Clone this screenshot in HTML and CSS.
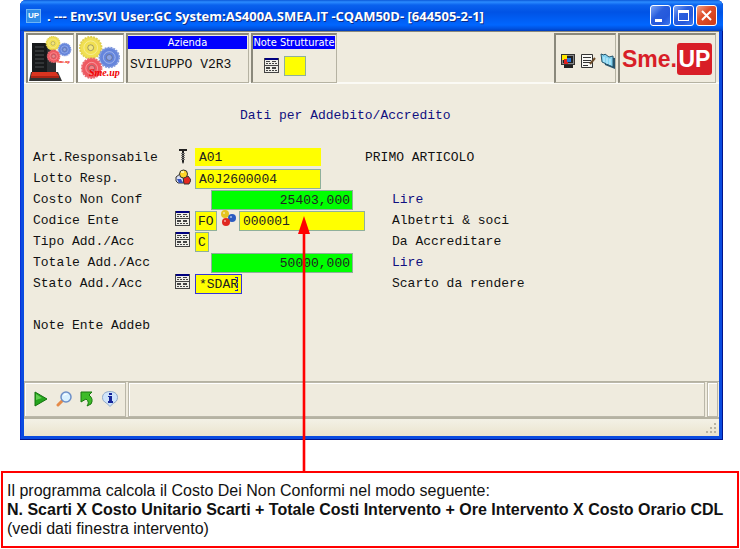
FILE: index.html
```html
<!DOCTYPE html>
<html lang="it">
<head>
<meta charset="utf-8">
<title>Dati per Addebito/Accredito</title>
<link rel="stylesheet" href="styles.css">
</head>
<body>
<svg class="defs" aria-hidden="true">
  <symbol id="list" viewBox="0 0 15 15">
    <path fill="#444" d="M0 0h15v15H0z"/><path fill="#f0efe8" d="M1 2h13v5H1zM1 8h13v6H1z"/><path fill="#000080" d="M1 0h13v2H1z"/>
    <path fill="#444" d="M2 3h4v1H2zM8 3h4v1H8zM2 5h2v1H2zM5 5h2v1H5zM8 5h2v1H8zM11 5h2v1h-2zM2 9h4v2H2zM8 9h4v2H8zM2 12h2v1H2zM5 12h2v1H5zM8 12h2v1H8zM11 12h2v1h-2z"/>
  </symbol>
  <symbol id="gears" viewBox="0 0 44 46">
    <g stroke-dasharray="2 1" stroke-width="2">
      <circle cx="13" cy="13" r="11" fill="#f1e052" stroke="#e0cf50"/>
      <circle cx="32" cy="23" r="10" fill="#6585dc" stroke="#7d96dc"/>
      <circle cx="14" cy="34" r="10" fill="#ef5860" stroke="#e86a70"/>
    </g>
    <g fill="none" stroke="#fff" stroke-opacity=".4"><circle cx="13" cy="13" r="7"/><circle cx="32" cy="23" r="6"/><circle cx="14" cy="34" r="6"/></g>
    <g fill="#fff" fill-opacity=".25" stroke="#555" stroke-opacity=".5"><circle cx="13" cy="13" r="3"/><circle cx="32" cy="23" r="3"/><circle cx="14" cy="34" r="3"/></g>
  </symbol>
</svg>

<main class="window">
  <header class="titlebar">
    <span class="app-icon">UP</span>
    <h1>. --- Env:SVI User:GC System:AS400A.SMEA.IT -CQAM50D- [644505-2-1]</h1>
    <button class="win-btn" aria-label="Riduci"><svg viewBox="0 0 19 19"><path fill="#fff" d="M4 13h7v3H4z"/></svg></button>
    <button class="win-btn" aria-label="Ingrandisci"><svg viewBox="0 0 19 19"><path fill="#fff" fill-rule="evenodd" d="M4 4h11v11H4zM5 7v7h9V7z"/></svg></button>
    <button class="win-btn close" aria-label="Chiudi"><svg viewBox="0 0 19 19"><path stroke="#fff" stroke-width="2" d="M5 5l9 9M14 5l-9 9"/></svg></button>
  </header>

  <div class="client">
    <div class="toolbar">
      <div class="cell picture">
        <svg class="server" viewBox="0 0 44 46">
          <path fill="#17191b" d="M4 8h15v32H4z"/><path fill="#2b2e31" d="M19 11h9v27h-9z"/>
          <path stroke="#4c5052" d="M7 12h9M7 16h9M7 20h9M7 24h9M7 28h9M7 32h9"/>
          <path fill="#333" d="M3 37h27l4 9H1z"/><path fill="#d93420" d="M4 37h24l3 4H3z"/><path fill="#a82315" d="M3 41h28v2H3z"/>
          <use href="#gears" x="17" y="0" width="27" height="29"/>
          <text class="tiny-brand" x="29" y="28">Sme.up</text>
        </svg>
      </div>
      <div class="cell picture">
        <svg class="server" viewBox="0 0 44 46"><use href="#gears" width="43" height="45"/><text class="small-brand" x="11" y="41">Sme.up</text></svg>
      </div>
      <div class="cell company"><h2>Azienda</h2><p>SVILUPPO V2R3</p></div>
      <div class="cell notes">
        <h2>Note Strutturate</h2>
        <div class="note-tools">
          <button class="icon-btn" aria-label="Elenco note"><svg class="list"><use href="#list"/></svg></button>
          <input class="note" aria-label="Nota strutturata">
        </div>
      </div>
      <div class="cell tools">
        <button class="icon-btn" aria-label="Schermo"><svg class="i16" viewBox="0 0 16 16">
          <path fill="#333" d="M1 1h14v11H1z"/><path fill="#888" d="M2 2h12v9H2z"/><path fill="#222" d="M3 3h10v7H3zM4 12h9v3H4z"/><path fill="#ffe800" d="M2 2h5v5H2z"/><path fill="#e02020" d="M4 6h4v5H4z"/><path fill="#2774d8" d="M7 5h4v4H7z"/></svg></button>
        <button class="icon-btn" aria-label="Appunti"><svg class="i16" viewBox="0 0 16 16">
          <path fill="#f8f8f4" stroke="#333" d="M1.500 1.500h11v13h-11z"/><path stroke="#333" d="M3 4.500h8M3 7.500h8M3 9.500h8M3 12.500h5"/><path stroke="#6b4b2a" stroke-width="2" d="M15 5l-5 6"/></svg></button>
        <button class="icon-btn" aria-label="Cartella"><svg class="i16" viewBox="0 0 16 16">
          <path fill="#29546c" d="M4 3l11 2v11L5 12z"/><path fill="#83d2ef" stroke="#27556b" d="M1 1l3 1 1-1 4 3 4-1v11L2 9z"/><path stroke="#c9f2ff" d="M4 4v5M7 5v6M10 6v6"/></svg></button>
      </div>
      <div class="cell brand"><span>Sme.</span><b>UP</b></div>
    </div>

    <form class="panel">
      <h2>Dati per Addebito/Accredito</h2>
      <div class="fields">
        <label for="art">Art.Responsabile</label>
        <svg class="i16" viewBox="0 0 16 16"><path fill="#222" d="M4 1h8v2H9v11l-1 2-1-2V3H4z"/><path stroke="#777" d="M6 5.500h4M6 7.500h4M6 9.500h4M6 11.500h4"/></svg>
        <div><input id="art" class="wide flat" value="A01"></div><output class="near">PRIMO ARTICOLO</output>

        <label for="lotto">Lotto Resp.</label>
        <svg class="i16" viewBox="0 0 16 16"><g stroke="#333"><path fill="#d8def5" d="M1 8l4-3 4 4-1 5H3l-2-2z"/><path fill="#e52820" d="M8 8l5-1 3 4-2 4H9z"/><circle cx="8.500" cy="5" r="4" fill="#ffd528"/></g><path fill="#3453bf" d="M2 10h4l2 4H4z"/><path fill="#fff3a0" d="M6 2h3v2H6z"/></svg>
        <div><input id="lotto" class="wide" value="A0J2600004"></div><output></output>

        <label for="costo">Costo Non Conf</label><span></span>
        <div><input id="costo" class="amount" value="25403,000"></div><output class="unit">Lire</output>

        <label for="ente">Codice Ente</label>
        <svg class="list"><use href="#list"/></svg>
        <div class="pair"><input id="ente" class="two" value="FO"><svg class="i16" viewBox="0 0 16 16"><circle cx="5" cy="4" r="4" fill="#e4c420"/><circle cx="12" cy="8" r="4" fill="#2b5ac0"/><circle cx="6" cy="12" r="4" fill="#e02820"/><g fill="#fff" fill-opacity=".6"><circle cx="4" cy="3" r="1"/><circle cx="11" cy="7" r="1"/><circle cx="5" cy="11" r="1"/></g></svg><input class="wide" aria-label="Numero ente" value="000001"></div><output>Albetrti &amp; soci</output>

        <label for="tipo">Tipo Add./Acc</label>
        <svg class="list"><use href="#list"/></svg>
        <div><input id="tipo" class="one" value="C"></div><output>Da Accreditare</output>

        <label for="totale">Totale Add./Acc</label><span></span>
        <div><input id="totale" class="amount" value="50000,000"></div><output class="unit">Lire</output>

        <label for="stato">Stato Add./Acc</label>
        <svg class="list"><use href="#list"/></svg>
        <div class="caret-field"><input id="stato" class="active" value="*SDAR"><svg class="ibeam" viewBox="0 0 5 16"><path stroke="#2222b0" stroke-dasharray="5 1" d="M3.500 1v14"/><path stroke="#2222b0" d="M1 1.500h2M1 14.500h2"/></svg></div><output>Scarto da rendere</output>

        <p class="last">Note Ente Addeb</p>
      </div>
    </form>

    <footer class="commands">
      <div class="actions">
        <button class="icon-btn" aria-label="Esegui"><svg class="i16" viewBox="0 0 16 16"><path fill="#25a51d" stroke="#14730f" d="M2 1l12 7-12 7z"/><path fill="#63cf51" d="M3 3l6 4-6 2z"/></svg></button>
        <button class="icon-btn" aria-label="Cerca"><svg class="i16" viewBox="0 0 16 16"><path stroke="#e58a48" stroke-width="3" stroke-linecap="round" d="M7 9l-5 5"/><circle cx="10" cy="6" r="5" fill="#d9f1ff" stroke="#6c8fc8" stroke-width="1.500"/><path fill="#fff" d="M7 5q1-3 5-2z"/></svg></button>
        <button class="icon-btn" aria-label="Indietro"><svg class="i16" viewBox="0 0 16 16"><path fill="#3dbb28" stroke="#19780f" d="M2 1h11l-3 3q5 4 2 9l-4 2q3-4-1-7l-5 3z"/></svg></button>
        <button class="icon-btn" aria-label="Informazioni"><svg class="i16" viewBox="0 0 16 16"><path fill="#cfe4fa" stroke="#8fa8c8" d="M8 .500c4 0 7.500 2 7.500 6 0 3-2 5-4 5.500L8 15.500 4.500 12C2 11 .500 9 .500 6.500c0-4 3.500-6 7.500-6z"/><path fill="#17269a" d="M7 2h3v2H7zM6 5h4v5h1v2H6v-2h1V6H6z"/></svg></button>
      </div>
      <div class="message"></div>
      <div class="end"></div>
    </footer>
    <div class="status"><svg class="grip" viewBox="0 0 12 12"><path fill="#b8b4a3" d="M9 1h2v2H9zM5 5h2v2H5zM9 5h2v2H9zM1 9h2v2H1zM5 9h2v2H5zM9 9h2v2H9z"/></svg></div>
  </div>
</main>

<aside class="callout">
  <svg class="arrow" viewBox="0 0 12 257"><path fill="#f00" d="M6 0l6 18H7.300v239H4.700V18H0z"/></svg>
  <p>Il programma calcola il Costo Dei Non Conformi nel modo seguente:</p>
  <p><strong>N. Scarti X Costo Unitario Scarti + Totale Costi Intervento + Ore Intervento X Costo Orario CDL</strong></p>
  <p>(vedi dati finestra intervento)</p>
</aside>
</body>
</html>
```

FILE: styles.css
```css
* { box-sizing: border-box; }
body { margin: 0; background: #fff; color: #111; font: 13px/21px "Liberation Mono", monospace; }
h1, h2, p { margin: 0; font-weight: normal; }
svg { display: block; flex: none; fill: none; }
.defs { position: absolute; width: 0; height: 0; }
.i16 { width: 16px; height: 16px; }
.list { width: 15px; height: 15px; }
.icon-btn { flex: none; padding: 0; border: 0; background: none; }

.window { margin: 0 17px 0 20px; padding: 0 4px 4px; border-radius: 6px 6px 0 0; background: #0a4be0; box-shadow: inset -1px -1px #00138c, inset 1px 0 #0831d9; }
.titlebar { display: flex; align-items: center; gap: 4px; height: 31px; margin: 0 -4px; padding: 0 6px; border-radius: 6px 6px 0 0; background: linear-gradient(#0b58d8 0, #2b8cff 2px, #0a62ee 5px, #0053e5 12px, #0066ff 25px, #0050dc 29px, #003dbd 31px); }
.app-icon { width: 15px; height: 14px; background: #2f8ce8; border: 1px solid #6db4f5; color: #fff; font: bold 8px/12px "Liberation Sans", sans-serif; text-align: center; }
.titlebar h1 { flex: 1; padding-left: 2px; color: #fff; font: bold 13px/20px "Open Sans", sans-serif; text-shadow: 1px 1px #0b2a86; white-space: nowrap; }
.win-btn { flex: none; width: 21px; height: 21px; margin-left: -2px; padding: 0; border: 1px solid #fff; border-radius: 3px; background: linear-gradient(135deg, #7fa6f6, #2a5edd 40%, #2458dc 70%, #3f7bf0); }
.win-btn svg { width: 19px; height: 19px; }
.win-btn.close { background: linear-gradient(135deg, #f0a288, #e0502c 40%, #d2401c 80%); }

.client { background: #efebde; }
.toolbar { display: flex; gap: 2px; padding: 1px 3px 1px 2px; height: 53px; border-bottom: 2px solid #fbfaf5; border-top: 1px solid #8a887b; }
.cell { height: 50px; border: 1px solid #b5b2a2; border-top: 2px solid #8a887b; border-left: 2px solid #8a887b; }
.picture { width: 48px; background: #fff; }
.server { width: 44px; height: 46px; }
.tiny-brand { fill: #e00; font: bold 4px "Liberation Serif", serif; }
.small-brand { fill: #f00000; font: italic bold 10px "Liberation Serif", serif; }
.cell h2 { height: 13px; margin: 1px 1px 0 0; background: #0000fe; color: #fff; font: 11px/13px "DejaVu Sans Condensed", "Noto Sans", sans-serif; text-align: center; white-space: nowrap; }
.company { width: 123px; }
.company p { padding: 5px 2px; }
.notes { width: 86px; }
.note-tools { display: flex; align-items: center; gap: 5px; padding: 6px 0 0 11px; }
.note-tools .note { width: 22px; height: 20px; }
.tools { display: flex; align-items: center; gap: 4px; width: 62px; margin-left: auto; padding: 4px 0 0 4px; }
.brand { display: flex; align-items: center; width: 98px; padding-left: 2px; color: #d81e27; font: bold 23px/32px "Liberation Sans", sans-serif; }
.brand b { width: 35px; border-radius: 3px; background: #d81e27; color: #fff; text-align: center; }

.panel { height: 297px; padding: 21px 9px 0; }
.panel h2 { margin-left: 207px; color: #101080; font: inherit; }
.fields { display: grid; grid-template-columns: 142px 20px 170px 27px 1fr; grid-auto-rows: 21px; margin-top: 21px; }
.fields > svg { margin-top: 1px; }
.fields output { grid-column: 5; white-space: nowrap; }
.fields output.near { grid-column: 4 / 6; }
.unit { color: #101080; }
.last { grid-column: 1 / -1; grid-row: 9; }
input { display: block; height: 20px; margin: 1px 0 0; padding: 1px 3px 0; border: 1px solid #8fb09b; border-radius: 0; outline: 0; background: #ff0; color: #222; font: inherit; line-height: 17px; }
.wide { width: 126px; }
.flat { border-color: #ff0; height: 18px; }
.amount { width: 142px; margin-left: 16px; padding-right: 2px; background: #0f0; text-align: right; }
.two { width: 22px; padding: 1px 2px 0; }
.one { width: 14px; padding: 1px 2px 0; }
.pair { display: flex; gap: 3px; }
.caret-field { position: relative; }
.active { width: 47px; border-color: #3636d8; }
.ibeam { position: absolute; left: 39px; top: 3px; width: 5px; height: 16px; }

.commands { display: flex; gap: 2px; height: 36px; padding-right: 1px; border-top: 1px solid #b5b2a2; }
.commands > div { border: 1px solid #bab7a9; box-shadow: inset 1px 1px #fff; }
.actions { display: flex; align-items: center; gap: 7px; width: 102px; padding: 0 0 2px 8px; }
.message { flex: 1; }
.end { width: 11px; }
.status { display: flex; justify-content: flex-end; align-items: flex-end; height: 19px; padding: 2px; border-top: 2px solid #b5b2a2; background: linear-gradient(#f3f1e6, #ebe4ce); }
.grip { width: 12px; height: 12px; }

.callout { position: relative; margin: 31px 1px 0; padding: 8px 4px; border: 2px solid #f00; color: #111; font: 16px/19px "Liberation Sans", sans-serif; white-space: nowrap; }
.arrow { position: absolute; left: 295px; bottom: 100%; width: 12px; height: 257px; }
```
